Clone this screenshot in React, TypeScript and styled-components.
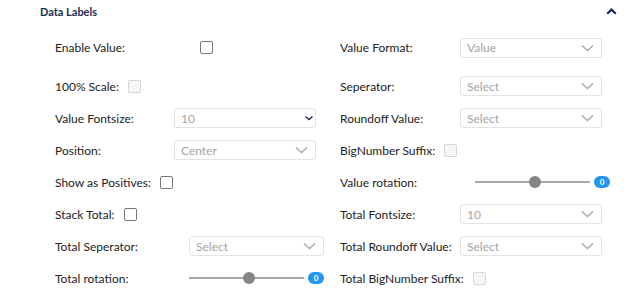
import React from "react";
import styled, { createGlobalStyle } from "styled-components";

type Control =
  | { kind: "checkbox"; disabled?: boolean }
  | { kind: "select"; value: string; width: number; dark?: boolean }
  | { kind: "slider"; value: number };

type FieldDef = { label: string; offset: number; control: Control };

const rows: [FieldDef, FieldDef][] = [
  [
    { label: "Enable Value:", offset: 145, control: { kind: "checkbox" } },
    { label: "Value Format:", offset: 120, control: { kind: "select", value: "Value", width: 142 } },
  ],
  [
    { label: "100% Scale:", offset: 73, control: { kind: "checkbox", disabled: true } },
    { label: "Seperator:", offset: 120, control: { kind: "select", value: "Select", width: 142 } },
  ],
  [
    { label: "Value Fontsize:", offset: 119, control: { kind: "select", value: "10", width: 142, dark: true } },
    { label: "Roundoff Value:", offset: 120, control: { kind: "select", value: "Select", width: 142 } },
  ],
  [
    { label: "Position:", offset: 119, control: { kind: "select", value: "Center", width: 142 } },
    { label: "BigNumber Suffix:", offset: 104, control: { kind: "checkbox", disabled: true } },
  ],
  [
    { label: "Show as Positives:", offset: 105, control: { kind: "checkbox" } },
    { label: "Value rotation:", offset: 135, control: { kind: "slider", value: 0 } },
  ],
  [
    { label: "Stack Total:", offset: 69, control: { kind: "checkbox" } },
    { label: "Total Fontsize:", offset: 120, control: { kind: "select", value: "10", width: 142 } },
  ],
  [
    { label: "Total Seperator:", offset: 134, control: { kind: "select", value: "Select", width: 135 } },
    { label: "Total Roundoff Value:", offset: 120, control: { kind: "select", value: "Select", width: 142 } },
  ],
  [
    { label: "Total rotation:", offset: 134, control: { kind: "slider", value: 0 } },
    { label: "Total BigNumber Suffix:", offset: 133, control: { kind: "checkbox", disabled: true } },
  ],
];

const SLIDER_MIN = -90;
const SLIDER_MAX = 90;

const Chevron: React.FC<{ dark?: boolean }> = ({ dark }) =>
  dark ? (
    <svg width="10" height="6" viewBox="0 0 10 6">
      <polyline points="1.5,1.5 5,4.5 8.5,1.5" fill="none" stroke="#1d2b57" strokeWidth="1.4" />
    </svg>
  ) : (
    <svg width="13" height="8" viewBox="0 0 13 8">
      <polyline points="1,1.5 6.5,6.5 12,1.5" fill="none" stroke="#a9a9a9" strokeWidth="1.4" />
    </svg>
  );

const renderControl = (control: Control) => {
  switch (control.kind) {
    case "checkbox":
      return <Checkbox $disabled={control.disabled} />;
    case "select":
      return (
        <SelectBox $width={control.width} $dark={control.dark}>
          <SelectText>{control.value}</SelectText>
          <Chevron dark={control.dark} />
        </SelectBox>
      );
    case "slider": {
      const pct = ((control.value - SLIDER_MIN) / (SLIDER_MAX - SLIDER_MIN)) * 100;
      return (
        <SliderWrap>
          <Track>
            <Thumb style={{ left: `${pct + 2}%` }} />
          </Track>
          <Badge>{control.value}</Badge>
        </SliderWrap>
      );
    }
  }
};

const App: React.FC = () => {
  return (
    <>
      <GlobalStyle />
      <Panel>
        <Header>
          <Title>Data Labels</Title>
          <svg width="11" height="7" viewBox="0 0 11 7">
            <polyline points="1.2,5.8 5.5,1.6 9.8,5.8" fill="none" stroke="#1d2b57" strokeWidth="2.2" />
          </svg>
        </Header>
        <Grid>
          {rows.flat().map((field) => (
            <Field key={field.label}>
              <Label $width={field.offset}>{field.label}</Label>
              {renderControl(field.control)}
            </Field>
          ))}
        </Grid>
      </Panel>
    </>
  );
};

const GlobalStyle = createGlobalStyle`
  body {
    margin: 0;
    background: #ffffff;
    font-family: Lato, "Noto Sans", sans-serif;
  }
`;

const Panel = styled.div`
  width: 639px;
  height: 289px;
  overflow: hidden;
  background: #fff;
`;

const Header = styled.div`
  height: 22px;
  display: flex;
  align-items: center;
  justify-content: space-between;
  padding: 0 22px 0 40px;
`;

const Title = styled.div`
  font-size: 11px;
  font-weight: 700;
  color: #1d2b57;
`;

const Grid = styled.div`
  display: grid;
  grid-template-columns: 285px 1fr;
  grid-template-rows: 45px repeat(7, 32px);
  padding: 3px 0 0 55px;
`;

const Field = styled.div`
  display: flex;
  align-items: center;
`;

const Label = styled.div<{ $width: number }>`
  width: ${(p) => p.$width}px;
  flex-shrink: 0;
  font-size: 12px;
  color: #222;
  white-space: nowrap;
`;

const Checkbox = styled.div<{ $disabled?: boolean }>`
  width: 13px;
  height: 13px;
  box-sizing: border-box;
  border-radius: 2px;
  border: 1px solid ${(p) => (p.$disabled ? "#d6d6d6" : "#767676")};
  background: ${(p) => (p.$disabled ? "#f6f6f6" : "#fff")};
`;

const SelectBox = styled.div<{ $width: number; $dark?: boolean }>`
  width: ${(p) => p.$width}px;
  height: 20px;
  box-sizing: border-box;
  display: flex;
  align-items: center;
  justify-content: space-between;
  padding: 0 ${(p) => (p.$dark ? "1px" : "7px")} 0 6px;
  border: 1px solid #e3e3e3;
  border-radius: 3px;
  background: #fff;
`;

const SelectText = styled.span`
  font-size: 12px;
  color: #a3a3a3;
`;

const SliderWrap = styled.div`
  display: flex;
  align-items: center;
  gap: 4px;
`;

const Track = styled.div`
  position: relative;
  width: 115px;
  height: 2px;
  background: #a8a8a8;
`;

const Thumb = styled.div`
  position: absolute;
  top: 50%;
  width: 12px;
  height: 12px;
  border-radius: 50%;
  background: #858585;
  transform: translate(-50%, -50%);
`;

const Badge = styled.div`
  width: 16px;
  height: 12px;
  border-radius: 6px;
  background: #2196f3;
  color: #fff;
  font-size: 8px;
  font-weight: 700;
  display: flex;
  align-items: center;
  justify-content: center;
`;

export default App;
